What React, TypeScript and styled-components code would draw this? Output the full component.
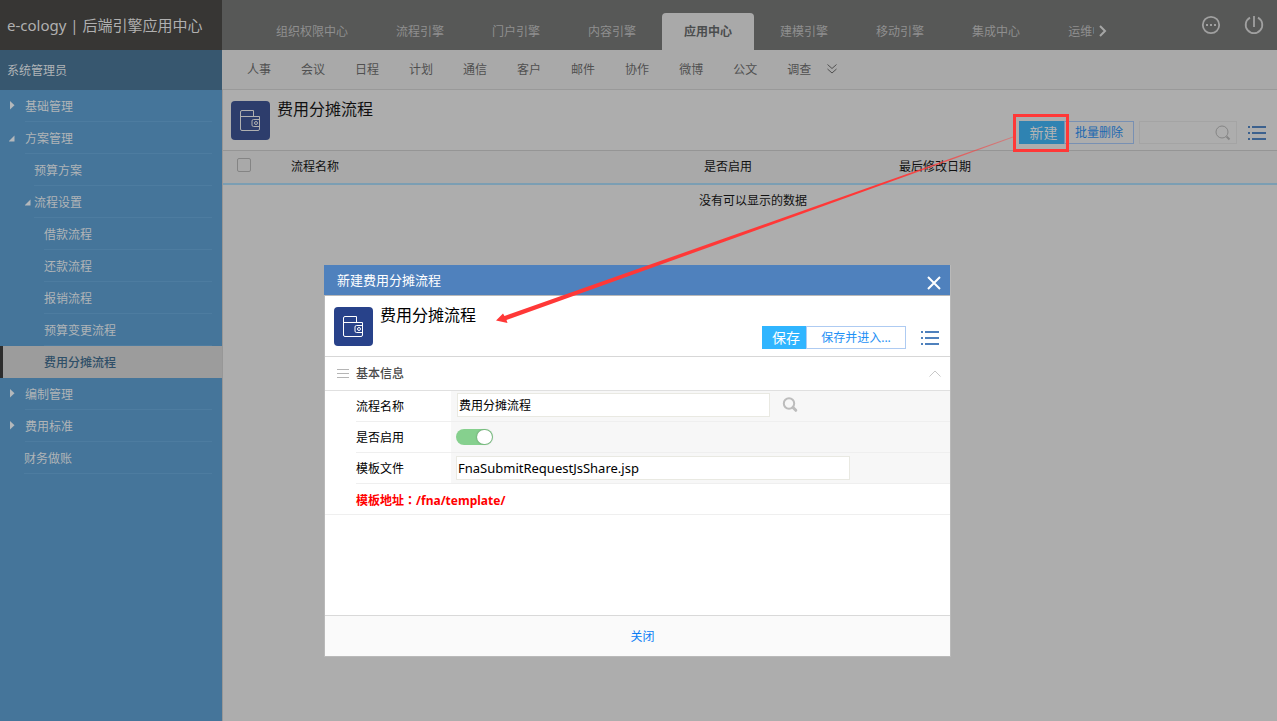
import React, { useState } from "react";
import styled, { createGlobalStyle, css } from "styled-components";

const GlobalStyle = createGlobalStyle`
  *, *::before, *::after { box-sizing: border-box; }
  body {
    margin: 0;
    background: #adadad;
    color: #111;
    font: 12px/16px "Noto Sans", "Noto Sans CJK SC", sans-serif;
  }
  button, input { font: inherit; margin: 0; }
  button { cursor: pointer; padding: 0; }
  a { text-decoration: none; color: inherit; }
  ul, h1, h2 { margin: 0; padding: 0; font-weight: normal; list-style: none; }
`;

const Shell = styled.div`
  display: grid;
  grid-template-columns: 222px minmax(0, 1fr);
  grid-template-rows: 50px minmax(0, 1fr);
  min-height: 100vh;
`;

const Brand = styled.div`
  display: flex;
  align-items: center;
  padding-left: 7px;
  background: #373634;
  color: #b0b0b0;
  font-size: 15px;
  line-height: 20px;
  white-space: nowrap;
`;

const TopBar = styled.header`
  display: flex;
  align-items: flex-end;
  padding-left: 30px;
  background: #575857;
  color: #8f8f8f;
`;

const TopNav = styled.nav`
  display: flex;
  flex: 1;
  min-width: 0;
  overflow: hidden;
`;

const TopTab = styled.a<{ $active?: boolean }>`
  flex: none;
  height: 37px;
  margin: 0 2px;
  padding: 0 22px;
  border-radius: 4px 4px 0 0;
  line-height: 38px;
  ${(p) => p.$active && css`
    background: #a9a9a9;
    color: #4b4d4e;
    font-weight: bold;
  `}
`;

const TopTools = styled.div`
  display: flex;
  align-items: center;
  height: 50px;
  padding-right: 13px;
`;

const IconButton = styled.button`
  display: flex;
  align-items: center;
  justify-content: center;
  border: 0;
  background: none;
  color: inherit;
`;

const MoreTabs = styled(IconButton)`
  width: 18px;
  height: 24px;
  margin: 12px 89px 0 0;
  color: #a6a6a6;
`;

const ToolButton = styled(IconButton)`
  width: 20px;
  height: 20px;
  color: #a0a0a0;
  & + & { margin-left: 23px; }
`;

const Sidebar = styled.aside`
  background: #45759a;
  color: #b0b4b7;
`;

const UserName = styled.div`
  height: 40px;
  padding-left: 7px;
  background: #37576f;
  line-height: 42px;
`;

const MenuItem = styled.li`
  height: 32px;
`;

const MenuLink = styled.a<{ $indent: number; $active?: boolean }>`
  display: flex;
  position: relative;
  height: 32px;
  padding: 0 10px 0 ${(p) => p.$indent}px;
  line-height: 34px;
  ${(p) => p.$active && css`
    background: #9c9c9c;
    color: #2f4f68;
    font-weight: 500;
    box-shadow: inset 3px 0 0 #2d2d2d;
  `}
`;

const MenuText = styled.span<{ $line: boolean }>`
  flex: 1;
  height: 32px;
  border-bottom: 1px solid ${(p) => (p.$line ? "#4d7ca0" : "transparent")};
`;

const MenuArrow = styled.svg<{ $indent: number }>`
  position: absolute;
  left: ${(p) => p.$indent - 16}px;
  top: 11px;
  fill: #b4b8bb;
`;

const Main = styled.main`
  border-left: 1px solid #979797;
`;

const SubNav = styled.nav`
  display: flex;
  height: 40px;
  margin-left: -1px;
  padding-left: 10px;
  background: #a9a9a9;
  border-bottom: 1px solid #999;
  color: #505050;
`;

const SubLink = styled.a`
  padding: 0 15px;
  line-height: 40px;
`;

const SubMore = styled(IconButton)`
  width: 12px;
  height: 38px;
`;

const PageHead = styled.div`
  display: flex;
  align-items: flex-start;
  height: 61px;
  padding: 11px 11px 0 8px;
  border-bottom: 1px solid #959595;
`;

const ModuleIcon = styled.div<{ $dim?: boolean }>`
  display: flex;
  align-items: center;
  justify-content: center;
  flex: none;
  width: 39px;
  height: 39px;
  border-radius: 4px;
  background: ${(p) => (p.$dim ? "#2d3d6c" : "#28428a")};
  color: ${(p) => (p.$dim ? "#b0b0b0" : "#fff")};
`;

const PageTitle = styled.h1`
  flex: 1;
  margin-left: 7px;
  font-size: 16px;
  line-height: 16px;
`;

const Actions = styled.div<{ $top: number }>`
  display: flex;
  margin-top: ${(p) => p.$top}px;
`;

const Highlighted = styled.div`
  position: relative;
  display: flex;
  &::after {
    content: "";
    position: absolute;
    inset: -7px -5px -7px -6px;
    border: 3px solid #ff3837;
    pointer-events: none;
  }
`;

const PrimaryButton = styled.button<{ $dim?: boolean }>`
  width: ${(p) => (p.$dim ? 45 : 44)}px;
  height: 23px;
  padding-left: 4px;
  border: 0;
  background: ${(p) => (p.$dim ? "#2f83b2" : "#30b5ff")};
  color: ${(p) => (p.$dim ? "#b4b4b4" : "#fff")};
  font-size: 14px;
  line-height: 22px;
`;

const OutlineButton = styled.button<{ $dim?: boolean }>`
  width: ${(p) => (p.$dim ? 70 : 100)}px;
  height: 23px;
  padding-top: 1px;
  border: 1px solid ${(p) => (p.$dim ? "#7890b3" : "#aecbf2")};
  background: ${(p) => (p.$dim ? "transparent" : "#fff")};
  color: ${(p) => (p.$dim ? "#1c68b0" : "#1e90f5")};
  line-height: 20px;
  white-space: nowrap;
`;

const SearchBox = styled.div`
  display: flex;
  width: 98px;
  height: 23px;
  margin-left: 5px;
  border: 1px solid #a4a4a4;
  color: #858585;
`;

const SearchInput = styled.input`
  flex: 1;
  min-width: 0;
  border: 0;
  background: transparent;
  outline: 0;
`;

const SearchButton = styled(IconButton)`
  width: 26px;
`;

const ListButton = styled(IconButton)<{ $dim?: boolean }>`
  width: 18px;
  height: 24px;
  margin-left: ${(p) => (p.$dim ? 11 : 15)}px;
  color: ${(p) => (p.$dim ? "#3c618e" : "#4f81bd")};
`;

const DataTable = styled.table`
  width: 100%;
  table-layout: fixed;
  border-spacing: 0;
  th {
    height: 34px;
    padding: 0 8px;
    background: #a9a9a9;
    border-bottom: 2px solid #7b9eb3;
    font-weight: normal;
    text-align: left;
  }
  td {
    height: 32px;
    padding: 0 0 0 6px;
    text-align: center;
  }
`;

const SelectAll = styled.input`
  display: block;
  appearance: none;
  width: 14px;
  height: 14px;
  margin: 0 0 4px 6px;
  border: 1px solid #848484;
  border-radius: 2px;
`;

const SelectColumn = styled.col`width: 60px;`;
const StatusColumn = styled.col`width: 195px;`;
const DateColumn = styled.col`width: 386px;`;

const Overlay = styled.div`
  position: fixed;
  inset: 0;
  display: flex;
  align-items: flex-start;
  justify-content: center;
  padding: 265px 2px 0 0;
`;

const Dialog = styled.section`
  position: relative;
  display: flex;
  flex-direction: column;
  width: 627px;
  min-height: 392px;
  border: 1px solid #b9b9b9;
  border-top: 0;
  background: #fff;
  color: #000;
`;

const DialogBar = styled.div`
  display: flex;
  align-items: center;
  justify-content: space-between;
  height: 31px;
  margin-left: -1px;
  padding: 0 8px 0 13px;
  border-bottom: 1px solid #b9b9b9;
  background: #4f81bd;
  color: #fff;
  font-size: 13px;
`;

const CloseIcon = styled(IconButton)`
  width: 16px;
  height: 16px;
  margin-top: 5px;
`;

const DialogHead = styled.div`
  display: flex;
  align-items: flex-start;
  height: 61px;
  padding: 11px 11px 0 9px;
  border-bottom: 1px solid #d7d7d7;
`;

const SectionHead = styled.div`
  display: flex;
  align-items: center;
  height: 34px;
  padding: 0 8px 0 12px;
  border-bottom: 1px solid #e0e0e0;
  color: #4a4a4a;
`;

const SectionTitle = styled.h2`
  flex: 1;
  margin-left: 7px;
  font-size: 12px;
  font-weight: 500;
`;

const FormRow = styled.div`
  display: flex;
  height: 31px;
  padding-left: 31px;
`;

const FieldLabel = styled.label`
  width: 95px;
  border-bottom: 1px solid #efefef;
  line-height: 31px;
`;

const Field = styled.div<{ $raised?: boolean }>`
  display: flex;
  align-items: center;
  flex: 1;
  padding: 0 0 ${(p) => (p.$raised ? 2 : 0)}px ${(p) => (p.$raised ? 6 : 5)}px;
  background: #f7f7f7;
  border-bottom: 1px solid #efefef;
`;

const TextInput = styled.input<{ $wide?: boolean }>`
  width: ${(p) => (p.$wide ? 394 : 313)}px;
  height: 24px;
  padding: 0 1px;
  border: 1px solid #e9e9e2;
  background: #fff;
  font-size: ${(p) => (p.$wide ? 13 : 12)}px;
`;

const BrowseButton = styled(IconButton)`
  width: 16px;
  height: 16px;
  margin-left: 12px;
  color: #bdbdbd;
`;

const Toggle = styled.input`
  appearance: none;
  display: flex;
  justify-content: flex-start;
  width: 37px;
  height: 16px;
  border-radius: 8px;
  background: #c8c8c8;
  &::before {
    content: "";
    width: 15px;
    height: 14px;
    margin: 1px;
    border-radius: 7px;
    background: #fff;
    box-shadow: 0 0 2px rgba(0, 0, 0, 0.4);
  }
  &:checked {
    justify-content: flex-end;
    background: #86d08e;
  }
`;

const PathNote = styled.p`
  height: 31px;
  margin: 0;
  padding-left: 31px;
  border-bottom: 1px solid #efefef;
  color: #f00;
  font-weight: bold;
  line-height: 32px;
`;

const Colon = styled.span`
  font-family: "Noto Sans CJK TC", sans-serif;
`;

const DialogFoot = styled.div`
  display: flex;
  align-items: center;
  justify-content: center;
  height: 41px;
  margin-top: auto;
  padding: 2px 0 0 10px;
  border-top: 1px solid #d9d9d9;
  background: #fafafa;
`;

const TextButton = styled.button`
  border: 0;
  background: none;
  color: #0a7df5;
`;

const Pointer = styled.svg`
  position: absolute;
  left: 171px;
  top: -130px;
  pointer-events: none;
`;

const WalletIcon = () => (
  <svg width="21" height="22" viewBox="0 0 21 22" fill="none" stroke="currentColor">
    <path d="M.5 6.500h19v12.500a1.500 1.500 0 0 1-1.500 1.500H2a1.500 1.500 0 0 1-1.500-1.500V2A1.500 1.500 0 0 1 2 .5h11.500v6" />
    <path d="M19.500 9.500h-6a1.500 1.500 0 0 0-1.500 1.500v4a1.500 1.500 0 0 0 1.500 1.500h6" />
    <circle cx="16" cy="13" r="1.500" />
  </svg>
);

const ListIcon = () => (
  <svg width="18" height="14" viewBox="0 0 18 14" fill="currentColor">
    <path d="M0 0h2v2H0zM4 0h14v2H4zM0 6h2v2H0zM4 6h14v2H4zM0 12h2v2H0zM4 12h14v2H4z" />
  </svg>
);

const topTabs = ["组织权限中心", "流程引擎", "门户引擎", "内容引擎", "应用中心", "建模引擎", "移动引擎", "集成中心", "运维中心"];
const subLinks = ["人事", "会议", "日程", "计划", "通信", "客户", "邮件", "协作", "微博", "公文", "调查"];

type Entry = { text: string; indent: number; state?: "open" | "closed"; active?: boolean };
const menu: Entry[] = [
  { text: "基础管理", indent: 25, state: "closed" },
  { text: "方案管理", indent: 25, state: "open" },
  { text: "预算方案", indent: 34 },
  { text: "流程设置", indent: 34, state: "open" },
  { text: "借款流程", indent: 44 },
  { text: "还款流程", indent: 44 },
  { text: "报销流程", indent: 44 },
  { text: "预算变更流程", indent: 44 },
  { text: "费用分摊流程", indent: 44, active: true },
  { text: "编制管理", indent: 25, state: "closed" },
  { text: "费用标准", indent: 25, state: "closed" },
  { text: "财务做账", indent: 24 },
];

export default function App() {
  const [name, setName] = useState("费用分摊流程");
  const [file, setFile] = useState("FnaSubmitRequestJsShare.jsp");
  const [enabled, setEnabled] = useState(true);

  return (
    <>
      <GlobalStyle />
      <Shell>
        <Brand>e-cology | 后端引擎应用中心</Brand>
        <TopBar>
          <TopNav>
            {topTabs.map((t) => (
              <TopTab key={t} href="#" $active={t === "应用中心"}>{t}</TopTab>
            ))}
          </TopNav>
          <TopTools>
            <MoreTabs aria-label="更多">
              <svg width="8" height="12" viewBox="0 0 8 12" fill="none" stroke="currentColor" strokeWidth="2">
                <path d="M1 1l5 5-5 5" />
              </svg>
            </MoreTabs>
            <ToolButton aria-label="消息">
              <svg width="20" height="20" viewBox="0 0 20 20" fill="none" stroke="currentColor" strokeWidth="1.800">
                <circle cx="10" cy="10" r="8.200" />
                <path d="M5 10h2M9 10h2M13 10h2" strokeWidth="2" />
              </svg>
            </ToolButton>
            <ToolButton aria-label="退出">
              <svg width="20" height="20" viewBox="0 0 20 20" fill="none" stroke="currentColor" strokeWidth="1.800">
                <path d="M6 2.600a8.300 8.300 0 1 0 8 0M10 1v11" />
              </svg>
            </ToolButton>
          </TopTools>
        </TopBar>

        <Sidebar>
          <UserName>系统管理员</UserName>
          <ul>
            {menu.map((m) => (
              <MenuItem key={m.text}>
                <MenuLink href="#" $indent={m.indent} $active={m.active}>
                  {m.state && (
                    <MenuArrow $indent={m.state === "open" && m.indent > 30 ? m.indent + 7 : m.indent} width="6" height="9" viewBox="0 0 6 9">
                      <path d={m.state === "open" ? "M5.500 2.500v6h-6z" : "M1 0l4.500 4.200L1 8.500z"} />
                    </MenuArrow>
                  )}
                  <MenuText $line={!m.active}>{m.text}</MenuText>
                </MenuLink>
              </MenuItem>
            ))}
          </ul>
        </Sidebar>

        <Main>
          <SubNav>
            {subLinks.map((t) => <SubLink key={t} href="#">{t}</SubLink>)}
            <SubMore aria-label="展开">
              <svg width="10" height="10" viewBox="0 0 10 10" fill="none" stroke="currentColor">
                <path d="M.5.5L5 4.500 9.500.5M.5 5L5 9l4.500-4" />
              </svg>
            </SubMore>
          </SubNav>
          <PageHead>
            <ModuleIcon $dim><WalletIcon /></ModuleIcon>
            <PageTitle>费用分摊流程</PageTitle>
            <Actions $top={20}>
              <Highlighted>
                <PrimaryButton $dim>新建</PrimaryButton>
              </Highlighted>
              <OutlineButton $dim>批量删除</OutlineButton>
              <SearchBox>
                <SearchInput aria-label="搜索" />
                <SearchButton aria-label="搜索">
                  <svg width="16" height="16" viewBox="0 0 16 16" fill="none" stroke="currentColor">
                    <circle cx="7" cy="7" r="6" />
                    <path d="M11.500 11.500l3 3" strokeWidth="2" />
                  </svg>
                </SearchButton>
              </SearchBox>
              <ListButton $dim aria-label="菜单"><ListIcon /></ListButton>
            </Actions>
          </PageHead>
          <DataTable>
            <colgroup>
              <SelectColumn />
              <col />
              <StatusColumn />
              <DateColumn />
            </colgroup>
            <thead>
              <tr>
                <th><SelectAll type="checkbox" aria-label="全选" /></th>
                <th>流程名称</th>
                <th>是否启用</th>
                <th>最后修改日期</th>
              </tr>
            </thead>
            <tbody>
              <tr><td colSpan={4}>没有可以显示的数据</td></tr>
            </tbody>
          </DataTable>
        </Main>
      </Shell>

      <Overlay>
        <Dialog role="dialog" aria-labelledby="dialog-title">
          <DialogBar>
            <span id="dialog-title">新建费用分摊流程</span>
            <CloseIcon aria-label="关闭窗口">
              <svg width="14" height="14" viewBox="0 0 14 14" fill="none" stroke="currentColor" strokeWidth="2">
                <path d="M1 1l12 12M13 1L1 13" />
              </svg>
            </CloseIcon>
          </DialogBar>
          <DialogHead>
            <ModuleIcon><WalletIcon /></ModuleIcon>
            <PageTitle as="h2">费用分摊流程</PageTitle>
            <Actions $top={19}>
              <PrimaryButton>保存</PrimaryButton>
              <OutlineButton>保存并进入...</OutlineButton>
              <ListButton aria-label="菜单"><ListIcon /></ListButton>
            </Actions>
          </DialogHead>
          <SectionHead>
            <svg width="12" height="9" viewBox="0 0 12 9" stroke="#b5b5b5">
              <path d="M0 .5h12M0 4.500h12M0 8.500h12" />
            </svg>
            <SectionTitle>基本信息</SectionTitle>
            <IconButton aria-label="收起">
              <svg width="14" height="8" viewBox="0 0 14 8" fill="none" stroke="#c8c8c8">
                <path d="M1.500 6.500l5.500-5.500 5.500 5.500" />
              </svg>
            </IconButton>
          </SectionHead>
          <FormRow>
            <FieldLabel htmlFor="flow-name">流程名称</FieldLabel>
            <Field $raised>
              <TextInput id="flow-name" value={name} onChange={(e) => setName(e.target.value)} />
              <BrowseButton aria-label="选择流程">
                <svg width="16" height="16" viewBox="0 0 16 16" fill="none" stroke="currentColor" strokeWidth="2">
                  <circle cx="7" cy="6.500" r="5.200" />
                  <path d="M11 10.500l2.800 2.800" strokeWidth="3" strokeLinecap="round" />
                </svg>
              </BrowseButton>
            </Field>
          </FormRow>
          <FormRow>
            <FieldLabel htmlFor="flow-enabled">是否启用</FieldLabel>
            <Field>
              <Toggle id="flow-enabled" type="checkbox" checked={enabled} onChange={(e) => setEnabled(e.target.checked)} />
            </Field>
          </FormRow>
          <FormRow>
            <FieldLabel htmlFor="flow-file">模板文件</FieldLabel>
            <Field>
              <TextInput id="flow-file" $wide value={file} onChange={(e) => setFile(e.target.value)} />
            </Field>
          </FormRow>
          <PathNote>模板地址<Colon>：</Colon>/fna/template/</PathNote>
          <DialogFoot><TextButton>关闭</TextButton></DialogFoot>
          <Pointer width="520" height="190" viewBox="0 0 520 190">
            <defs>
              <linearGradient id="fade" x1="0" x2="1" y1="0" y2="0">
                <stop offset="0.750" stopColor="#ff3837" />
                <stop offset="1" stopColor="#ff3837" stopOpacity="0.400" />
              </linearGradient>
            </defs>
            <path fill="url(#fade)" d="M0 185.500L7 178.500l1.500 2.500L228 103.500 517 1.500v1L229 106.500 10.500 185l1 3z" />
          </Pointer>
        </Dialog>
      </Overlay>
    </>
  );
}
